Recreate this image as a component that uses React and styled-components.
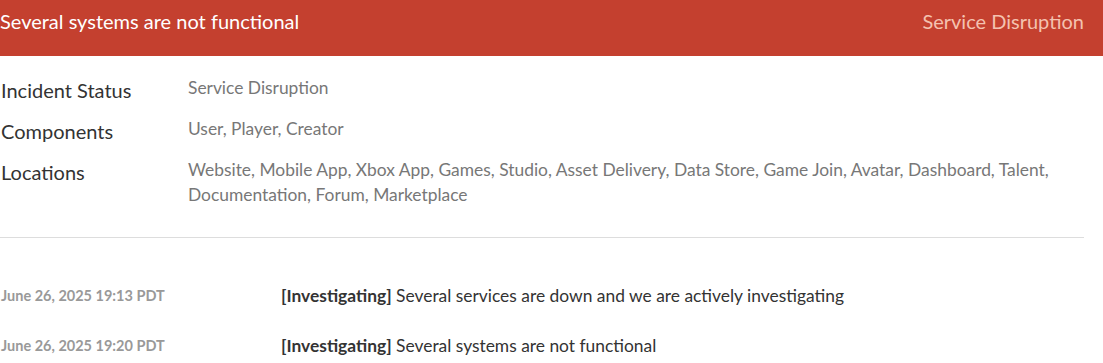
import React from 'react';
import styled, { createGlobalStyle } from 'styled-components';

const GlobalStyle = createGlobalStyle`
  html, body {
    margin: 0;
    padding: 0;
    background: #ffffff;
  }
  body {
    font-family: Lato, 'Open Sans', Arial, sans-serif;
    color: #333333;
  }
`;

const Page = styled.div`
  width: 1103px;
  padding-right: 19px;
  box-sizing: border-box;
`;

const Banner = styled.header`
  display: flex;
  justify-content: space-between;
  align-items: flex-start;
  height: 56px;
  box-sizing: border-box;
  margin-right: -19px;
  padding: 8px 19px 0 0;
  background: #c4402f;
  font-size: 20px;
  line-height: 26px;
`;

const BannerTitle = styled.h1`
  margin: 0;
  font-size: 20px;
  font-weight: 400;
  line-height: 26px;
  color: #ffffff;
`;

const BannerStatus = styled.span`
  color: #f4c2b0;
`;

const Details = styled.dl`
  display: grid;
  grid-template-columns: 188px 1fr;
  row-gap: 11px;
  margin: 19px 0 0;
  padding: 0 0 30px 1px;
  border-bottom: 1px solid #dddddd;
`;

const Label = styled.dt`
  margin: 0;
  font-size: 20px;
  line-height: 30px;
  color: #333333;
`;

const Value = styled.dd`
  margin: 0 0 0 -1px;
  font-size: 17.4px;
  line-height: 25px;
  color: #777777;
`;

const Updates = styled.div`
  margin-top: 32px;
  padding-left: 1px;
`;

const Update = styled.div`
  display: grid;
  grid-template-columns: 280px 1fr;
  align-items: center;
  height: 50px;
`;

const Stamp = styled.span`
  font-size: 14.5px;
  font-weight: 700;
  color: #999999;
`;

const Message = styled.span`
  font-size: 17.4px;
  color: #333333;

  strong {
    font-weight: 700;
  }
`;

const details = [
  ['Incident Status', 'Service Disruption'],
  ['Components', 'User, Player, Creator'],
  [
    'Locations',
    'Website, Mobile App, Xbox App, Games, Studio, Asset Delivery, Data Store, Game Join, Avatar, Dashboard, Talent, Documentation, Forum, Marketplace',
  ],
];

const updates = [
  {
    time: 'June 26, 2025 19:13 PDT',
    status: 'Investigating',
    text: 'Several services are down and we are actively investigating',
  },
  {
    time: 'June 26, 2025 19:20 PDT',
    status: 'Investigating',
    text: 'Several systems are not functional',
  },
];

export default function App() {
  return (
    <Page>
      <GlobalStyle />
      <Banner>
        <BannerTitle>Several systems are not functional</BannerTitle>
        <BannerStatus>Service Disruption</BannerStatus>
      </Banner>
      <Details>
        {details.map(([label, value]) => (
          <React.Fragment key={label}>
            <Label>{label}</Label>
            <Value>{value}</Value>
          </React.Fragment>
        ))}
      </Details>
      <Updates>
        {updates.map((u) => (
          <Update key={u.time}>
            <Stamp>{u.time}</Stamp>
            <Message>
              <strong>[{u.status}]</strong> {u.text}
            </Message>
          </Update>
        ))}
      </Updates>
    </Page>
  );
}
